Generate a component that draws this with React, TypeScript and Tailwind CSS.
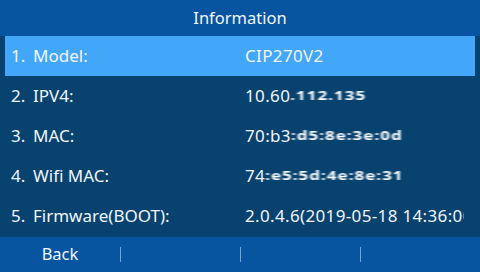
const rows = [
  { n: '1.', label: 'Model:', value: 'CIP270V2', hidden: '' },
  { n: '2.', label: 'IPV4:', value: '10.60', hidden: '.112.135' },
  { n: '3.', label: 'MAC:', value: '70:b3', hidden: ':d5:8e:3e:0d' },
  { n: '4.', label: 'Wifi MAC:', value: '74', hidden: ':e5:5d:4e:8e:31' },
  { n: '5.', label: 'Firmware(BOOT):', value: '2.0.4.6(2019-05-18 14:36:00)', hidden: '' },
]

export default function App() {
  return (
    <div
      className="w-[480px] h-[272px] flex flex-col bg-[#08426f] text-[#f2f4f7] overflow-hidden"
      style={{ fontFamily: '"Noto Sans", "Open Sans", sans-serif' }}
    >
      <div className="h-[36px] bg-[#0755a0] flex items-center justify-center text-[16.5px]">
        Information
      </div>

      <div className="flex-1 flex flex-col">
        {rows.map((r, i) => (
          <div
            key={r.n}
            className={
              'h-[40px] mx-[5px] pr-[11px] flex items-center text-[17px] ' +
              (i === 0 ? 'bg-[#42a7f9]' : '')
            }
          >
            <span className="w-[28px] pl-[6px]">{r.n}</span>
            <span className="w-[212px]">{r.label}</span>
            <span className="flex-1 whitespace-nowrap overflow-hidden tracking-[0.35px]">
              {r.value}
              {r.hidden && (
                <span className="inline-block blur-[1px] text-white font-bold tracking-[1px] scale-y-75">
                  {r.hidden}
                </span>
              )}
            </span>
          </div>
        ))}
      </div>

      <div className="h-[35px] bg-[#0755a0] flex items-center text-[16.5px]">
        <div className="w-[120px] text-center">Back</div>
        <div className="w-px h-[15px] bg-[#7fa2c8]" />
        <div className="w-[119px]" />
        <div className="w-px h-[15px] bg-[#7fa2c8]" />
        <div className="w-[119px]" />
        <div className="w-px h-[15px] bg-[#7fa2c8]" />
      </div>
    </div>
  )
}
